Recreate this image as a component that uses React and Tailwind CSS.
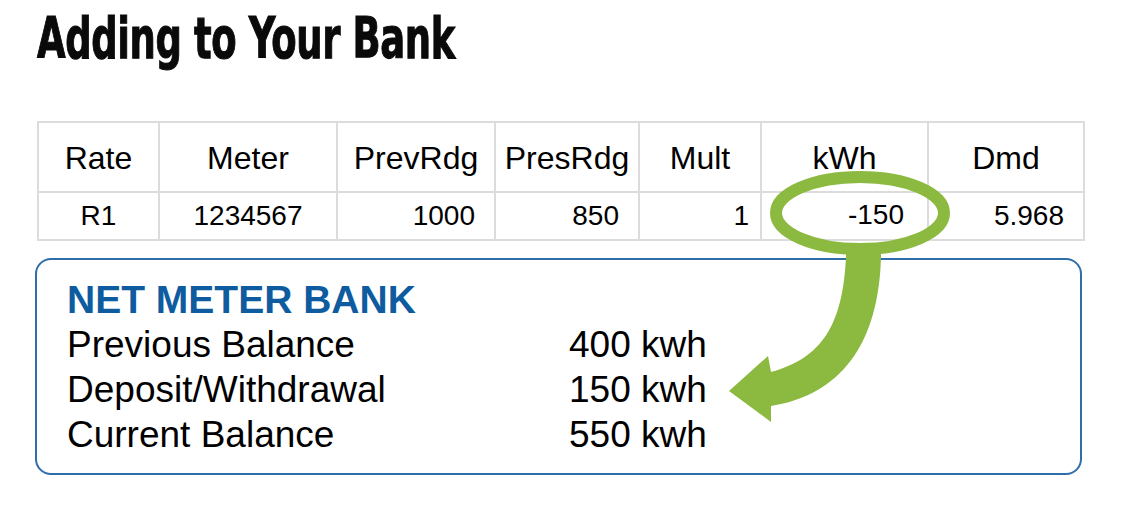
import React from "react";

const headers = ["Rate", "Meter", "PrevRdg", "PresRdg", "Mult", "kWh", "Dmd"];

export default function App() {
  return (
    <div className="relative w-[1126px] h-[520px] bg-white overflow-hidden">
      <div className="flex flex-col pl-[37px] pt-[9px]">
        <h1
          className="text-[54px] leading-[60px] font-bold text-[#0a0a0a] tracking-[-0.5px] font-stretch-condensed origin-left scale-x-[0.76] scale-y-[1.05] whitespace-nowrap"
          style={{ fontFamily: '"DejaVu Sans", "Liberation Sans", sans-serif', WebkitTextStroke: "1px #0a0a0a" }}
        >
          Adding to Your Bank
        </h1>

        <div
          className="mt-[52px] w-[1048px] bg-[#dcdcdc] p-[2px] grid grid-cols-[119px_176px_156px_142px_120px_165px_154px] grid-rows-[68px_46px] gap-[2px] text-black"
          style={{ fontFamily: '"Liberation Sans", Arial, sans-serif' }}
        >
          {headers.map((h) => (
            <div key={h} className="bg-white flex items-center justify-center text-[32px] pt-[2px]">
              {h}
            </div>
          ))}
          <div className="bg-white flex items-center justify-center text-[28px]">R1</div>
          <div className="bg-white flex items-center justify-center text-[28px]">1234567</div>
          <div className="bg-white flex items-center justify-end pr-[19px] text-[28px]">1000</div>
          <div className="bg-white flex items-center justify-end pr-[19px] text-[28px]">850</div>
          <div className="bg-white flex items-center justify-end pr-[11px] text-[28px]">1</div>
          <div className="bg-white flex items-center justify-end pr-[23px] text-[28px] pb-[2px]">-150</div>
          <div className="bg-white flex items-center justify-end pr-[19px] text-[28px]">5.968</div>
        </div>

        <div
          className="mt-[17px] ml-[-2px] w-[1047px] h-[217px] border-2 border-[#2e6eaa] rounded-[16px] pl-[30px] pt-[17px] text-[37px] leading-[45px] text-black"
          style={{ fontFamily: '"Liberation Sans", Arial, sans-serif' }}
        >
          <div className="font-bold text-[#0e5c9f] text-[39px]">NET METER BANK</div>
          <div className="grid grid-cols-[502px_auto]">
            <div>Previous Balance</div>
            <div>400 kwh</div>
            <div>Deposit/Withdrawal</div>
            <div>150 kwh</div>
            <div>Current Balance</div>
            <div>550 kwh</div>
          </div>
        </div>
      </div>

      <svg className="absolute left-0 top-0 pointer-events-none" width="1126" height="520" viewBox="0 0 1126 520">
        <ellipse cx="860" cy="213" rx="84" ry="36" fill="none" stroke="#8cb93f" strokeWidth="12" />
        <path
          d="M846 246 L881 246 L881 256 C879 345 840 395 771 406 L771 422 L729 391 L768 356 L771 372 C822 358 843 325 846 256 Z"
          fill="#8cb93f"
        />
      </svg>
    </div>
  );
}
